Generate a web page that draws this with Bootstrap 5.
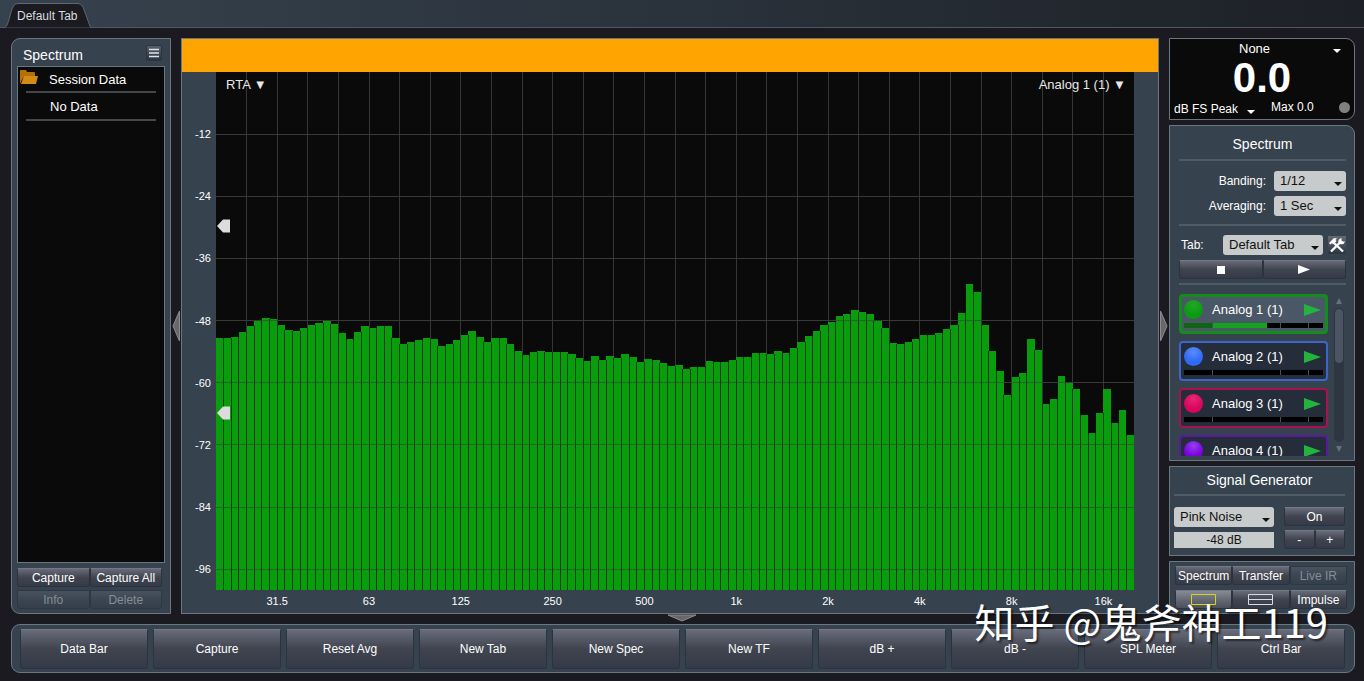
<!DOCTYPE html>
<html lang="en">
<head>
<meta charset="utf-8">
<meta name="viewport" content="width=device-width, initial-scale=1">
<title>Spectrum</title>
<link href="https://cdn.jsdelivr.net/npm/bootstrap@5.3.0/dist/css/bootstrap.min.css" rel="stylesheet">
<style>
  :root { --panel: #36424e; --edge: #6b7780; --ink: #0a0a0a; --rule: #56616c; }
  body { background: #1a1a20; color: #fff; font-family: "Liberation Sans", Arial, sans-serif; font-size: 13px; line-height: 16px; }
  .app { height: 100vh; min-height: 560px; }
  .tabstrip { height: 28px; background: linear-gradient(90deg, #36424e, #2a323b 50%, #1d2026); border-bottom: 1px solid #4d5862; }
  .tabstrip a { position: relative; z-index: 0; display: block; width: 86px; height: 25px; margin: 3px 0 0 5px; padding: 5px 0 0 12px; font-size: 12px; color: #d8dcdf; text-decoration: none; white-space: nowrap; }
  .tabstrip svg { position: absolute; inset: 0; z-index: -1; }
  .workspace { padding: 10px 9px 0 11px; min-height: 0; }
  .panel { background: var(--panel); border: 1px solid var(--edge); }
  .side-left { width: 160px; border-radius: 9px 0 0 9px; padding: 0 8px 4px 5px; }
  .side-right { width: 186px; gap: 5px; }
  .title { font-size: 14px; line-height: 18px; }
  .grip { width: 10px; }
  .grip-low { height: 10px; }
  .menu-btn { width: 16px; height: 16px; background: linear-gradient(#55606c, #2b3440); border: 1px solid #2b3440; border-radius: 2px; }
  .panel-head { height: 27px; padding: 1px 0 0 6px; }
  .session { background: var(--ink); border: 1px solid var(--edge); margin: 0 -3px 5px 0; }
  .session li { margin: 0 8px; padding: 5px 0 0 23px; border-bottom: 2px solid #42474c; height: 26px; }
  .session li.none { height: 28px; padding: 6px 0 0 24px; }
  .session svg { position: absolute; left: 2px; top: 3px; }
  .key { border: 1px solid #2c3340; border-top-color: #747784; border-radius: 0 0 3px 3px; background: linear-gradient(#686b79, #40444f 50%, #353a48); color: #fff; font-size: 12px; line-height: 14px; padding: 0; white-space: nowrap; height: 19px; flex: 1 1 0; min-width: 0; display: flex; align-items: center; justify-content: center; }
  .key:disabled { opacity: 1; background: linear-gradient(#48535f, #3b4652 50%, #343f4b); border-color: #2e3843; color: #858d96; }
  .key.sel { background: linear-gradient(#888b95, #60646f 60%, #4c505c); }
  .alert-strip { height: 33px; background: #ffa400; }
  .graph { display: grid; grid-template-columns: 34px 1fr 24px; grid-template-rows: 1fr 23px; font-size: 11px; }
  .plot { background: var(--ink); }
  .plot > svg.chart { position: absolute; inset: 0; width: 100%; height: 100%; }
  .plot button { position: absolute; top: 5px; font: 400 13px/16px "Liberation Sans", sans-serif; color: #e8e8e8; background: none; border: 0; padding: 0; }
  .axis-y span { position: absolute; right: 5px; transform: translateY(-50%); }
  .axis-x span { position: absolute; top: 3px; transform: translateX(-50%); }
  .marker { position: absolute; left: 1px; transform: translateY(-50%); }
  .drop { width: auto; min-height: 0; height: 20px; border: 0; border-radius: 3px; color: #111; font-size: 13px; line-height: 18px; padding: 0 16px 0 6px; background: #c8cbcb url("data:image/svg+xml,%3Csvg xmlns='http://www.w3.org/2000/svg' width='8' height='5'%3E%3Cpath d='M0 0h8l-4 4z' fill='%23111'/%3E%3C/svg%3E") no-repeat right 4px top 11px / 8px 5px; flex-shrink: 0; }
  .drop-dark { background-color: transparent; color: #fff; font-size: 12px; padding-left: 0; background-image: url("data:image/svg+xml,%3Csvg xmlns='http://www.w3.org/2000/svg' width='8' height='5'%3E%3Cpath d='M0 0h8l-4 4z' fill='%23fff'/%3E%3C/svg%3E"); }
  .level { background: var(--ink); border-radius: 0 9px 9px 0; height: 82px; font-size: 12px; padding-top: 1px; }
  .level .source { margin-left: 69px; width: 106px; height: 18px; background-position: right 4px top 9px; font-size: 13px; }
  .level .kind { width: 85px; }
  .big { font-size: 42px; line-height: 42px; font-weight: 700; margin-top: -1px; }
  .lamp { width: 11px; height: 11px; background: #808080; }
  .rule { height: 2px; background: var(--rule); opacity: .8; flex: none; }
  .opts { border-radius: 0 9px 0 0; padding: 9px 8px 4px 9px; min-height: 0; overflow: hidden; flex: 1 1 0; }
  .opts label { font-size: 12px; }
  .opts .narrow { width: 72px; }
  .opts .wide { width: 100px; }
  .tool { width: 18px; height: 18px; background: linear-gradient(#646976, #2c3440); border: 0; padding: 0; }
  .bank { flex: 1 1 0; min-height: 0; gap: 6px; }
  .channels { flex: 1 1 0; overflow: hidden; gap: 7px; }
  .chan { flex: none; height: 40px; border: 2px solid var(--c); border-radius: 4px; background: #242d39; padding: 4px 3px 3px 3px; }
  .chan.active { background: #4a5766; border-width: 3px; padding: 3px 2px 2px 2px; }
  .chan.active .meter { background: linear-gradient(90deg, #0e6413 20%, #12a51c 20% 60%, #000 60%); }
  .ball { width: 19px; height: 19px; border-radius: 50%; background: radial-gradient(circle at 50% 25%, var(--hi), var(--b) 60%); }
  .name { margin-left: 9px; }
  .meter { height: 5px; background: #000; }
  .meter i { position: absolute; top: 0; bottom: 0; width: 1px; background: #46505c; }
  .meter i:nth-child(1) { left: 20%; } .meter i:nth-child(2) { left: 69%; } .meter i:nth-child(3) { left: 89%; }
  .scroller { width: 10px; margin-right: 2px; }
  .track { background: #2e3741; border-radius: 5px; }
  .thumb { height: 56px; background: #4b5563; border-radius: 5px; border: 1px solid #2c3540; }
  .gen { height: 90px; padding: 4px 9px 0 4px; }
  .gen input { width: 100px; height: 16px; min-height: 0; border: 0; border-radius: 0; background: #c8cbcb; color: #111; font-size: 12px; line-height: 16px; text-align: center; padding: 0; }
  .views { height: 53px; padding: 4px 7px 0 5px; border-radius: 0 0 9px 0; }
  .command { margin: 0 9px 8px 11px; border-radius: 9px; padding: 4px 9px 3px 8px; gap: 5px; height: 49px; }
  .command .key { height: 40px; padding-bottom: 1px; }
  .watermark { position: absolute; right: 36px; bottom: 32px; font: 400 40px/56px "Noto Sans CJK SC", sans-serif; color: #fff; text-shadow: 2px 2px 2px rgba(0,0,0,.55); pointer-events: none; white-space: nowrap; }
</style>
</head>
<body>
<div class="app d-flex flex-column position-relative">
  <nav class="tabstrip flex-shrink-0" aria-label="Tabs">
    <a href="#graph"><svg width="86" height="25" viewBox="0 0 86 25"><path d="M0 24.500C4 22 5 9 8 4Q9 .5 13 .5H73Q76 .5 78 4L85.500 24.500" fill="#1a1a20" stroke="#5d6871"/></svg>Default Tab</a>
  </nav>

  <main class="workspace d-flex flex-grow-1">
    <aside class="panel side-left d-flex flex-column flex-shrink-0">
      <div class="panel-head d-flex justify-content-between align-items-center">
        <h1 class="title m-0 fw-normal pt-1">Spectrum</h1>
        <button class="menu-btn p-0 d-flex align-items-center justify-content-center" aria-label="Menu"><svg width="12" height="10" viewBox="0 0 12 10"><path d="M1 1.500h10M1 5h10M1 8.500h10" stroke="#dfe3e8" stroke-width="1.300"/></svg></button>
      </div>
      <ul class="session list-unstyled flex-grow-1 position-relative">
        <li><svg width="18" height="15" viewBox="0 0 18 15"><path d="M0 14V1q0-1 1-1h5l1 2h7q1 0 1 1v3H5Q3 7 0 14z" fill="#b86f06"/><path d="M4 6h14l-2 8H1z" fill="#d48a16"/></svg>Session Data</li>
        <li class="none">No Data</li>
      </ul>
      <div class="d-flex"><button class="key">Capture</button><button class="key">Capture All</button></div>
      <div class="d-flex" style="padding-top:3px"><button class="key" disabled>Info</button><button class="key" disabled>Delete</button></div>
    </aside>

    <div class="grip d-flex align-items-center justify-content-center"><svg width="8" height="32" viewBox="0 0 8 32"><path d="M7.500 1v30L1 16z" fill="#68686c" stroke="#8c8c90"/></svg></div>

    <section id="graph" class="panel d-flex flex-column flex-grow-1">
      <div class="alert-strip flex-shrink-0"></div>
      <div class="graph flex-grow-1">
        <div class="axis-y position-relative" id="yaxis"></div>
        <div class="plot position-relative">
          <svg class="chart" viewBox="0 0 918 518" preserveAspectRatio="none" id="chart" role="img" aria-label="Real time analyser"></svg>
          <button style="left:10px">RTA ▼</button>
          <button style="right:8px">Analog 1 (1) ▼</button>
          <svg class="marker" style="top:29.800%" width="14" height="15" viewBox="0 0 14 15"><path d="M0 7.500 6 1h7v13H6z" fill="#dcdcdc"/></svg>
          <svg class="marker" style="top:65.800%" width="14" height="15" viewBox="0 0 14 15"><path d="M0 7.500 6 1h7v13H6z" fill="#dcdcdc"/></svg>
        </div>
        <div></div><div></div>
        <div class="axis-x position-relative" id="xaxis"></div>
      </div>
    </section>

    <div class="grip d-flex align-items-center justify-content-center"><svg width="8" height="32" viewBox="0 0 8 32"><path d="M.5 1v30L7 16z" fill="#68686c" stroke="#8c8c90"/></svg></div>

    <aside class="side-right d-flex flex-column flex-shrink-0">
      <section class="panel level d-flex flex-column flex-shrink-0">
        <select class="form-select drop drop-dark source" aria-label="Source"><option>None</option></select>
        <div class="big text-center">0.0</div>
        <div class="d-flex align-items-center ps-1">
          <select class="form-select drop drop-dark kind" aria-label="Level type"><option>dB FS Peak</option></select>
          <span class="ms-2 ps-1 mb-1">Max 0.0</span><span class="lamp rounded-circle ms-auto me-1 mb-1"></span>
        </div>
      </section>

      <section class="panel opts d-flex flex-column">
        <h2 class="title text-center fw-normal m-0">Spectrum</h2>
        <div class="rule" style="margin:6px 0 10px"></div>
        <div class="d-flex justify-content-end align-items-center"><label for="banding" class="me-2">Banding:</label><select id="banding" class="form-select drop narrow"><option>1/12</option></select></div>
        <div class="d-flex justify-content-end align-items-center" style="margin-top:5px"><label for="avg" class="me-2">Averaging:</label><select id="avg" class="form-select drop narrow"><option>1 Sec</option></select></div>
        <div class="rule" style="margin:8px 0 9px"></div>
        <div class="d-flex align-items-center justify-content-between"><label for="tab" class="me-auto" style="padding-left:2px">Tab:</label><select id="tab" class="form-select drop wide" style="margin-right:5px"><option>Default Tab</option></select>
          <button class="tool" aria-label="Tab settings"><svg class="d-block" width="18" height="18" viewBox="0 0 18 18"><path d="M6 7 15 15.500" stroke="#fff" stroke-width="2.400"/><path d="M1 7 6 2l3 .5L7.500 4l1 1L5 8.500 4 7 2.500 8.500z" fill="#fff"/><path d="M3 15.500 12 6.500" stroke="#fff" stroke-width="2.400"/><path d="M10.500 7Q9.500 3 13.500 2v2.500L15 5.500h2Q16 9 12 8z" fill="#fff"/></svg></button></div>
        <div class="d-flex" style="margin-top:5px"><button class="key" aria-label="Stop"><svg width="8" height="8"><path d="M0 0h8v8H0z" fill="#fff"/></svg></button><button class="key" aria-label="Play"><svg width="12" height="9"><path d="M0 0 12 4.500 0 9z" fill="#fff"/></svg></button></div>
        <div class="rule" style="margin:4px 0 9px"></div>
        <div class="bank d-flex">
          <div class="channels d-flex flex-column" id="channels"></div>
          <div class="scroller d-flex flex-column align-items-center">
            <svg class="my-1 flex-shrink-0" width="6" height="6"><path d="M0 6 3 0l3 6z" fill="#66717c"/></svg>
            <div class="track w-100 flex-grow-1"><div class="thumb"></div></div>
            <svg class="my-1 flex-shrink-0" width="6" height="6"><path d="M0 0 3 6l3-6z" fill="#66717c"/></svg>
          </div>
        </div>
      </section>

      <section class="panel gen flex-shrink-0">
        <h2 class="title text-center fw-normal m-0">Signal Generator</h2>
        <div class="rule mb-2" style="margin-top:5px"></div>
        <div class="d-flex" style="gap:10px;padding-top:3px">
          <div><select class="form-select drop w-100" aria-label="Signal"><option>Pink Noise</option></select>
            <input class="form-control" style="margin-top:5px" aria-label="Level" value="-48 dB"></div>
          <div class="flex-grow-1"><div class="d-flex"><button class="key">On</button></div><div class="d-flex mt-1"><button class="key">-</button><button class="key">+</button></div></div>
        </div>
      </section>

      <section class="panel views flex-shrink-0">
        <div class="d-flex" style="margin-bottom:5px"><button class="key">Spectrum</button><button class="key">Transfer</button><button class="key" disabled>Live IR</button></div>
        <div class="d-flex"><button class="key sel" aria-label="Single pane"><svg width="25" height="11"><path d="M.5.5h24v10H.5z" fill="none" stroke="#d6d614"/></svg></button><button class="key" aria-label="Two panes"><svg width="25" height="11"><path d="M.5.5h24v10H.5zM.5 5.500h24" fill="none" stroke="#d8dce4"/></svg></button><button class="key">Impulse</button></div>
      </section>
    </aside>
  </main>

  <div class="grip-low flex-shrink-0 d-flex justify-content-center"><svg width="30" height="8" viewBox="0 0 30 8"><path d="M1 1h28L15 7z" fill="#68686c" stroke="#8c8c90"/></svg></div>

  <footer class="panel command d-flex flex-shrink-0">
    <button class="key">Data Bar</button><button class="key">Capture</button><button class="key">Reset Avg</button><button class="key">New Tab</button><button class="key">New Spec</button><button class="key">New TF</button><button class="key">dB +</button><button class="key">dB -</button><button class="key">SPL Meter</button><button class="key">Ctrl Bar</button>
  </footer>
  <div class="watermark" lang="zh">知乎 @鬼斧神工119</div>
</div>

<script src="https://cdn.jsdelivr.net/npm/bootstrap@5.3.0/dist/js/bootstrap.bundle.min.js"></script>
<script>
  // Height of each 1/12 octave band, in units down from 0 dB (518 units = 100 dB), 12 bands an octave.
  const tops = [266,266,265,260,254,249,246,247,253,258,259,256,253,251,249,252,261,267,260,254,256,254,254,266,
    272,270,268,266,267,274,272,268,263,259,265,270,266,266,272,279,283,280,279,280,280,280,282,286,
    289,284,288,284,286,282,285,290,287,288,291,294,293,297,295,295,289,290,290,288,285,285,281,281,
    282,279,281,276,270,264,259,253,250,244,242,238,240,242,249,256,271,272,270,267,263,263,261,257,
    253,241,212,220,253,279,299,323,305,301,267,278,332,327,304,311,317,343,361,341,317,351,338,363];
  const W = 918, H = 518, step = W / tops.length;
  let grid = '';
  for (let i = 1; i < 30; i++) grid += `M${i * 30.6} 0V${H}`;
  let rows = '';
  for (let db = 12; db < 100; db += 12) rows += `M0 ${db * 5.18}H${W}`;
  let area = '', gaps = '';
  tops.forEach((t, i) => {
    area += `M${i * step} ${H}V${t}h${step}V${H}z`;
    if (i) gaps += `M${i * step} ${H}V${Math.max(t, tops[i - 1])}`;
  });
  const line = (d, c) => `<path d="${d}" stroke="${c}" vector-effect="non-scaling-stroke" shape-rendering="crispEdges" fill="none"/>`;
  document.getElementById('chart').innerHTML =
    line(grid + rows, '#363636') + `<path d="${area}" fill="#099c0c" shape-rendering="crispEdges"/>` +
    line(gaps, '#033f04') + line(rows, 'rgba(60,60,60,.6)');

  document.getElementById('yaxis').innerHTML =
    [12, 24, 36, 48, 60, 72, 84, 96].map(v => `<span style="top:${v}%">-${v}</span>`).join('');
  document.getElementById('xaxis').innerHTML =
    ['31.5', '63', '125', '250', '500', '1k', '2k', '4k', '8k', '16k'].map((t, i) => `<span style="left:${(i + 2 / 3) * 10}%">${t}</span>`).join('');

  const colours = [['#138c1c', '#0a9c10', '#22a828'], ['#3b66cc', '#2f6af5', '#5a8cff'], ['#a8134f', '#d8045e', '#e82874'], ['#5a1aa0', '#7a00e0', '#9440ee']];
  document.getElementById('channels').innerHTML = colours.map(([c, b, hi], i) => `
    <div class="chan${i ? '' : ' active'}" style="--c:${c};--b:${b};--hi:${hi}">
      <div class="d-flex align-items-center mb-1"><span class="ball"></span><span class="name me-auto">Analog ${i + 1} (1)</span>
      <svg style="margin-right:2px" width="17" height="12"><path d="M0 0 17 6 0 12z" fill="#22b43c"/></svg></div>
      <div class="meter position-relative"><i></i><i></i><i></i></div>
    </div>`).join('');
</script>
</body>
</html>
